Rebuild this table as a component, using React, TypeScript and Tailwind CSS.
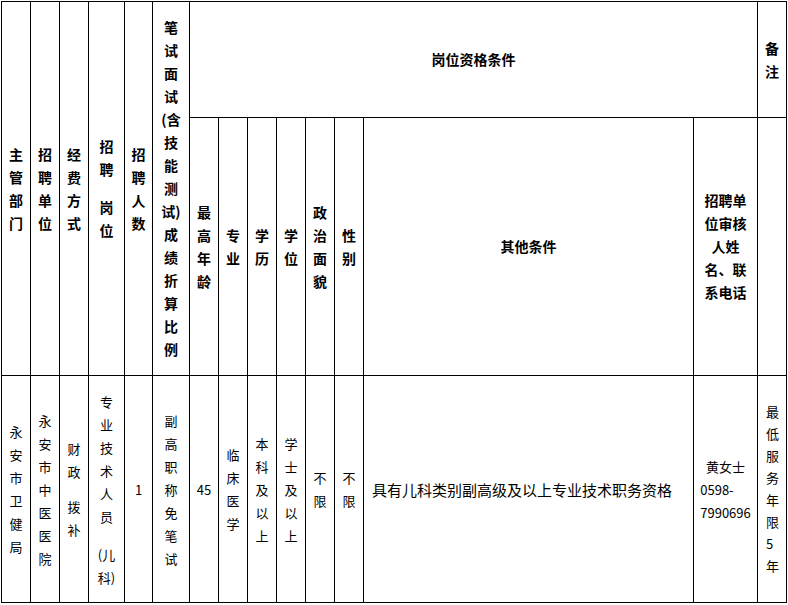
import React from "react";

const widths = [29, 29, 29, 36, 28, 37, 29, 29, 29, 29, 29, 29, 330, 64, 29];

function Lines(props: { items: string[]; gap?: string }) {
  const { items, gap = "h-[14px]" } = props;
  return (
    <>
      {items.map((t, i) =>
        t === "" ? (
          <span key={i} className={"block " + gap} />
        ) : (
          <span key={i} className="block whitespace-nowrap">
            {t}
          </span>
        )
      )}
    </>
  );
}

const th = "border-r border-b border-black p-0 align-middle text-center font-bold text-[14px] leading-[23px]";
const td = "border-r border-b border-black p-0 align-middle text-center text-[13px] leading-[23px]";

export default function App() {
  return (
    <div className="bg-white w-[788px] h-[605px] pt-px pl-px font-['Noto_Sans_CJK_SC','Noto_Sans',sans-serif] text-black">
      <table className="table-fixed border-separate border-spacing-0 border-l border-t border-black w-[786px]">
        <colgroup>
          {widths.map((w, i) => (
            <col key={i} style={{ width: w }} />
          ))}
        </colgroup>
        <tbody>
          <tr className="h-[116px]">
            <th rowSpan={2} className={th}>
              <Lines items={["主", "管", "部", "门"]} />
            </th>
            <th rowSpan={2} className={th}>
              <Lines items={["招", "聘", "单", "位"]} />
            </th>
            <th rowSpan={2} className={th}>
              <Lines items={["经", "费", "方", "式"]} />
            </th>
            <th rowSpan={2} className={th}>
              <Lines items={["招", "聘", "", "岗", "位"]} gap="h-[15px]" />
            </th>
            <th rowSpan={2} className={th}>
              <Lines items={["招", "聘", "人", "数"]} />
            </th>
            <th rowSpan={2} className={th}>
              <Lines
                items={["笔", "试", "面", "试", "(含", "技", "能", "测", "试)", "成", "绩", "折", "算", "比", "例"]}
              />
            </th>
            <th colSpan={8} className={th}>
              岗位资格条件
            </th>
            <th className={th}>
              <Lines items={["备", "注"]} />
            </th>
          </tr>
          <tr className="h-[258px]">
            <th className={th}>
              <Lines items={["最", "高", "年", "龄"]} />
            </th>
            <th className={th}>
              <Lines items={["专", "业"]} />
            </th>
            <th className={th}>
              <Lines items={["学", "历"]} />
            </th>
            <th className={th}>
              <Lines items={["学", "位"]} />
            </th>
            <th className={th}>
              <Lines items={["政", "治", "面", "貌"]} />
            </th>
            <th className={th}>
              <Lines items={["性", "别"]} />
            </th>
            <th className={th}>其他条件</th>
            <th className={th}>
              <Lines items={["招聘单", "位审核", "人姓", "名、联", "系电话"]} />
            </th>
            <th className={th}></th>
          </tr>
          <tr className="h-[227px]">
            <td className={td}>
              <Lines items={["永", "安", "市", "卫", "健", "局"]} />
            </td>
            <td className={td}>
              <Lines items={["永", "安", "市", "中", "医", "医", "院"]} />
            </td>
            <td className={td}>
              <Lines items={["财", "政", "", "拨", "补"]} gap="h-[12px]" />
            </td>
            <td className={td}>
              <Lines items={["专", "业", "技", "术", "人", "员", "", "(儿", "科)"]} gap="h-[15px]" />
            </td>
            <td className={td}>1</td>
            <td className={td}>
              <Lines items={["副", "高", "职", "称", "免", "笔", "试"]} />
            </td>
            <td className={td}>45</td>
            <td className={td}>
              <Lines items={["临", "床", "医", "学"]} />
            </td>
            <td className={td}>
              <Lines items={["本", "科", "及", "以", "上"]} />
            </td>
            <td className={td}>
              <Lines items={["学", "士", "及", "以", "上"]} />
            </td>
            <td className={td}>
              <Lines items={["不", "限"]} />
            </td>
            <td className={td}>
              <Lines items={["不", "限"]} />
            </td>
            <td className={td + " !text-left !text-[15px] pl-[8px]"}>具有儿科类别副高级及以上专业技术职务资格</td>
            <td className={td}>
              <span className="block">黄女士</span>
              <span className="inline-block text-left">
                <span className="block">0598-</span>
                <span className="block">7990696</span>
              </span>
            </td>
            <td className={td + " !text-left pl-[8px] !leading-[22px]"}>
              <Lines items={["最", "低", "服", "务", "年", "限", "5", "年"]} />
            </td>
          </tr>
        </tbody>
      </table>
    </div>
  );
}
